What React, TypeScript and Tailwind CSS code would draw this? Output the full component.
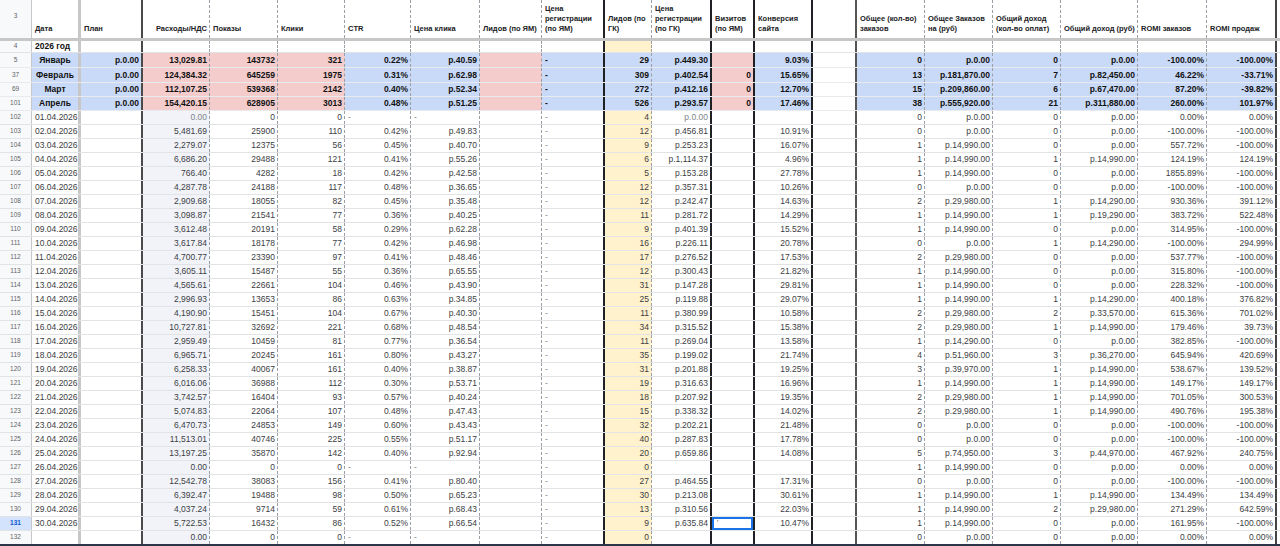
import React from 'react';

// column widths + right borders (widths include the border)
const COLS = [
  'w-[32px] border-r border-[#c7c7c7]',
  'w-[49px] border-r-[3px] border-[#c7c7c7]',
  'w-[62px] border-r-2 border-[#4a4a4a]',
  'w-[67px] border-r border-dashed border-[#9aa0a6]',
  'w-[68px] border-r border-dashed border-[#9aa0a6]',
  'w-[67px] border-r border-dashed border-[#9aa0a6]',
  'w-[66px] border-r border-dashed border-[#9aa0a6]',
  'w-[69px] border-r border-dashed border-[#9aa0a6]',
  'w-[62px] border-r border-dashed border-[#9aa0a6]',
  'w-[63px] border-r-2 border-[#202124]',
  'w-[47px] border-r border-dashed border-[#9aa0a6]',
  'w-[60px] border-r-2 border-[#202124]',
  'w-[43px] border-r-2 border-[#202124]',
  'w-[58px] border-r-2 border-[#202124]',
  'w-[44px] border-r-2 border-[#555]',
  'w-[68px] border-r border-dashed border-[#9aa0a6]',
  'w-[68px] border-r border-dashed border-[#9aa0a6]',
  'w-[68px] border-r border-dashed border-[#9aa0a6]',
  'w-[77px] border-r border-dashed border-[#9aa0a6]',
  'w-[69px] border-r border-dashed border-[#9aa0a6]',
  'w-[70px] border-r-2 border-[#444]',
];

const HEADERS: string[][] = [
  ['Дата'],
  ['План'],
  ['Расходы/НДС'],
  ['Показы'],
  ['Клики'],
  ['CTR'],
  ['Цена клика'],
  ['Лидов (по ЯМ)'],
  ['Цена', 'регистрации', '(по ЯМ)'],
  ['Лидов (по', 'ГК)'],
  ['Цена', 'регистрации', '(по ГК)'],
  ['Визитов', '(по ЯМ)'],
  ['Конверсия', 'сайта'],
  [],
  ['Общее (кол-во)', 'заказов'],
  ['Общее Заказов', 'на (руб)'],
  ['Общий доход', '(кол-во оплат)'],
  ['Общий доход (руб)'],
  ['ROMI заказов'],
  ['ROMI продаж'],
];

type Row = string[];

const MONTHS: Row[] = [
  ['5', 'Январь', '13,029.81', '143732', '321', '0.22%', 'р.40.59', '29', 'р.449.30', '', '9.03%', '0', 'р.0.00', '0', 'р.0.00', '-100.00%', '-100.00%'],
  ['37', 'Февраль', '124,384.32', '645259', '1975', '0.31%', 'р.62.98', '309', 'р.402.54', '0', '15.65%', '13', 'р.181,870.00', '7', 'р.82,450.00', '46.22%', '-33.71%'],
  ['69', 'Март', '112,107.25', '539368', '2142', '0.40%', 'р.52.34', '272', 'р.412.16', '0', '12.70%', '15', 'р.209,860.00', '6', 'р.67,470.00', '87.20%', '-39.82%'],
  ['101', 'Апрель', '154,420.15', '628905', '3013', '0.48%', 'р.51.25', '526', 'р.293.57', '0', '17.46%', '38', 'р.555,920.00', '21', 'р.311,880.00', '260.00%', '101.97%'],
];

const DAYS: Row[] = [
  ['102', '01.04.2026', '0.00', '0', '0', '-', '-', '4', 'р.0.00', '', '0', 'р.0.00', '0', 'р.0.00', '0.00%', '0.00%'],
  ['103', '02.04.2026', '5,481.69', '25900', '110', '0.42%', 'р.49.83', '12', 'р.456.81', '10.91%', '0', 'р.0.00', '0', 'р.0.00', '-100.00%', '-100.00%'],
  ['104', '03.04.2026', '2,279.07', '12375', '56', '0.45%', 'р.40.70', '9', 'р.253.23', '16.07%', '1', 'р.14,990.00', '0', 'р.0.00', '557.72%', '-100.00%'],
  ['105', '04.04.2026', '6,686.20', '29488', '121', '0.41%', 'р.55.26', '6', 'р.1,114.37', '4.96%', '1', 'р.14,990.00', '1', 'р.14,990.00', '124.19%', '124.19%'],
  ['106', '05.04.2026', '766.40', '4282', '18', '0.42%', 'р.42.58', '5', 'р.153.28', '27.78%', '1', 'р.14,990.00', '0', 'р.0.00', '1855.89%', '-100.00%'],
  ['107', '06.04.2026', '4,287.78', '24188', '117', '0.48%', 'р.36.65', '12', 'р.357.31', '10.26%', '0', 'р.0.00', '0', 'р.0.00', '-100.00%', '-100.00%'],
  ['108', '07.04.2026', '2,909.68', '18055', '82', '0.45%', 'р.35.48', '12', 'р.242.47', '14.63%', '2', 'р.29,980.00', '1', 'р.14,290.00', '930.36%', '391.12%'],
  ['109', '08.04.2026', '3,098.87', '21541', '77', '0.36%', 'р.40.25', '11', 'р.281.72', '14.29%', '1', 'р.14,990.00', '1', 'р.19,290.00', '383.72%', '522.48%'],
  ['110', '09.04.2026', '3,612.48', '20191', '58', '0.29%', 'р.62.28', '9', 'р.401.39', '15.52%', '1', 'р.14,990.00', '0', 'р.0.00', '314.95%', '-100.00%'],
  ['111', '10.04.2026', '3,617.84', '18178', '77', '0.42%', 'р.46.98', '16', 'р.226.11', '20.78%', '0', 'р.0.00', '1', 'р.14,290.00', '-100.00%', '294.99%'],
  ['112', '11.04.2026', '4,700.77', '23390', '97', '0.41%', 'р.48.46', '17', 'р.276.52', '17.53%', '2', 'р.29,980.00', '0', 'р.0.00', '537.77%', '-100.00%'],
  ['113', '12.04.2026', '3,605.11', '15487', '55', '0.36%', 'р.65.55', '12', 'р.300.43', '21.82%', '1', 'р.14,990.00', '0', 'р.0.00', '315.80%', '-100.00%'],
  ['114', '13.04.2026', '4,565.61', '22661', '104', '0.46%', 'р.43.90', '31', 'р.147.28', '29.81%', '1', 'р.14,990.00', '0', 'р.0.00', '228.32%', '-100.00%'],
  ['115', '14.04.2026', '2,996.93', '13653', '86', '0.63%', 'р.34.85', '25', 'р.119.88', '29.07%', '1', 'р.14,990.00', '1', 'р.14,290.00', '400.18%', '376.82%'],
  ['116', '15.04.2026', '4,190.90', '15451', '104', '0.67%', 'р.40.30', '11', 'р.380.99', '10.58%', '2', 'р.29,980.00', '2', 'р.33,570.00', '615.36%', '701.02%'],
  ['117', '16.04.2026', '10,727.81', '32692', '221', '0.68%', 'р.48.54', '34', 'р.315.52', '15.38%', '2', 'р.29,980.00', '1', 'р.14,990.00', '179.46%', '39.73%'],
  ['118', '17.04.2026', '2,959.49', '10459', '81', '0.77%', 'р.36.54', '11', 'р.269.04', '13.58%', '1', 'р.14,290.00', '0', 'р.0.00', '382.85%', '-100.00%'],
  ['119', '18.04.2026', '6,965.71', '20245', '161', '0.80%', 'р.43.27', '35', 'р.199.02', '21.74%', '4', 'р.51,960.00', '3', 'р.36,270.00', '645.94%', '420.69%'],
  ['120', '19.04.2026', '6,258.33', '40067', '161', '0.40%', 'р.38.87', '31', 'р.201.88', '19.25%', '3', 'р.39,970.00', '1', 'р.14,990.00', '538.67%', '139.52%'],
  ['121', '20.04.2026', '6,016.06', '36988', '112', '0.30%', 'р.53.71', '19', 'р.316.63', '16.96%', '1', 'р.14,990.00', '1', 'р.14,990.00', '149.17%', '149.17%'],
  ['122', '21.04.2026', '3,742.57', '16404', '93', '0.57%', 'р.40.24', '18', 'р.207.92', '19.35%', '2', 'р.29,980.00', '1', 'р.14,990.00', '701.05%', '300.53%'],
  ['123', '22.04.2026', '5,074.83', '22064', '107', '0.48%', 'р.47.43', '15', 'р.338.32', '14.02%', '2', 'р.29,980.00', '1', 'р.14,990.00', '490.76%', '195.38%'],
  ['124', '23.04.2026', '6,470.73', '24853', '149', '0.60%', 'р.43.43', '32', 'р.202.21', '21.48%', '0', 'р.0.00', '0', 'р.0.00', '-100.00%', '-100.00%'],
  ['125', '24.04.2026', '11,513.01', '40746', '225', '0.55%', 'р.51.17', '40', 'р.287.83', '17.78%', '0', 'р.0.00', '0', 'р.0.00', '-100.00%', '-100.00%'],
  ['126', '25.04.2026', '13,197.25', '35870', '142', '0.40%', 'р.92.94', '20', 'р.659.86', '14.08%', '5', 'р.74,950.00', '3', 'р.44,970.00', '467.92%', '240.75%'],
  ['127', '26.04.2026', '0.00', '0', '0', '-', '-', '0', '', '', '1', 'р.14,990.00', '0', 'р.0.00', '0.00%', '0.00%'],
  ['128', '27.04.2026', '12,542.78', '38083', '156', '0.41%', 'р.80.40', '27', 'р.464.55', '17.31%', '0', 'р.0.00', '0', 'р.0.00', '-100.00%', '-100.00%'],
  ['129', '28.04.2026', '6,392.47', '19488', '98', '0.50%', 'р.65.23', '30', 'р.213.08', '30.61%', '1', 'р.14,990.00', '1', 'р.14,990.00', '134.49%', '134.49%'],
  ['130', '29.04.2026', '4,037.24', '9714', '59', '0.61%', 'р.68.43', '13', 'р.310.56', '22.03%', '1', 'р.14,990.00', '2', 'р.29,980.00', '271.29%', '642.59%'],
  ['131', '30.04.2026', '5,722.53', '16432', '86', '0.52%', 'р.66.54', '9', 'р.635.84', '10.47%', '1', 'р.14,990.00', '0', 'р.0.00', '161.95%', '-100.00%'],
  ['132', '', '0.00', '0', '0', '-', '-', '0', '', '', '0', 'р.0.00', '0', 'р.0.00', '0.00%', '0.00%'],
];

const BLUE = 'bg-[#c9daf8]';
const PINK = 'bg-[#f4cccc]';
const YELLOW = 'bg-[#fff2cc]';

const Cell: React.FC<{ i: number; bg?: string; align?: string; children?: React.ReactNode }> = ({ i, bg = '', align = '', children }) => (
  <div className={`${COLS[i]} ${bg} ${align} relative h-full shrink-0 flex items-center overflow-hidden whitespace-nowrap`}>
    {children}
  </div>
);

const RowNum: React.FC<{ n: string; active?: boolean }> = ({ n, active }) => (
  <Cell
    i={0}
    bg={active ? 'bg-[#d3e3fd]' : 'bg-[#f8f9fa]'}
    align={`justify-center text-[6.5px] ${active ? 'font-bold text-[#0b57d0]' : 'font-normal text-[#5f6368]'}`}
  >
    {n}
  </Cell>
);

const alignFor = (v: string, i: number) => {
  if (v === '-' || i === 1) return 'justify-start pl-[3px]';
  return 'justify-end pr-[2px]';
};

const App: React.FC = () => {
  const monthRow = (r: Row, k: number) => {
    const cells = [r[1], 'р.0.00', r[2], r[3], r[4], r[5], r[6], '', '-', r[7], r[8], r[9], r[10], '', r[11], r[12], r[13], r[14], r[15], r[16]];
    const bgs = [BLUE, BLUE, PINK, PINK, PINK, BLUE, BLUE, PINK, BLUE, BLUE, BLUE, PINK, BLUE, '', BLUE, BLUE, BLUE, BLUE, BLUE, BLUE];
    const h = k < 2 ? 'h-[15px]' : 'h-[14px]';
    return (
      <div key={r[0]} className={`flex ${h} border-b border-[#e8eaed] font-bold text-[8.5px] text-[#111]`}>
        <RowNum n={r[0]} />
        {cells.map((v, j) => (
          <Cell key={j} i={j + 1} bg={bgs[j]} align={j === 0 ? 'justify-center' : alignFor(v, j + 1)}>
            {v}
          </Cell>
        ))}
        <div className="flex-1" />
      </div>
    );
  };

  const dayRow = (r: Row, k: number) => {
    const cells = [r[1], '', r[2], r[3], r[4], r[5], r[6], '', '-', r[7], r[8], '', r[9], '', r[10], r[11], r[12], r[13], r[14], r[15]];
    const last = k === DAYS.length - 1;
    const active = r[0] === '131';
    return (
      <div
        key={r[0]}
        className={`flex text-[8.5px] text-[#3c4043] ${last ? 'h-[15px] border-b-2 border-[#2b3648]' : 'h-[14px] border-b border-[#e2e3e5]'}`}
      >
        <RowNum n={r[0]} active={active} />
        {cells.map((v, j) => {
          const i = j + 1;
          let bg = '';
          if (i === 3) bg = 'bg-[#f1f3f9]';
          if (i === 10) bg = YELLOW;
          const muted = v === '-' || (r[0] === '102' && (i === 3 || i === 11));
          return (
            <Cell key={j} i={i} bg={bg} align={`${alignFor(v, i)} ${muted ? 'text-[#80868b]' : ''}`}>
              {v}
              {active && i === 12 && (
                <div className="absolute inset-0 border-2 border-[#1a73e8] pl-[3px] text-[7px] leading-[8px] text-[#333]">'</div>
              )}
            </Cell>
          );
        })}
        <div className="flex-1" />
      </div>
    );
  };

  return (
    <div className="w-[1280px] h-[546px] overflow-hidden bg-white font-['Liberation_Sans',Arial,sans-serif] leading-none">
      {/* header row */}
      <div className="flex h-[41px] border-b-[3px] border-[#c7c7c7] text-[7.5px] font-bold text-[#202124]">
        <Cell i={0} bg="bg-[#f8f9fa]" align="justify-center pb-[6px] text-[6.5px] font-normal text-[#5f6368]">
          3
        </Cell>
        {HEADERS.map((lines, j) => (
          <div
            key={j}
            className={`${COLS[j + 1]} ${j === 2 ? 'items-end pr-[2px]' : 'pl-[3px]'} h-full shrink-0 flex flex-col justify-end pb-[4px] leading-[10px] overflow-hidden whitespace-nowrap`}
          >
            {lines.map((l) => (
              <span key={l}>{l}</span>
            ))}
          </div>
        ))}
        <div className="flex-1" />
      </div>

      {/* year row */}
      <div className="flex h-[12px] border-b border-[#e2e3e5] text-[8.5px] font-bold text-[#111]">
        <RowNum n="4" />
        {HEADERS.map((_, j) => (
          <Cell key={j} i={j + 1} bg={j + 1 === 10 ? YELLOW : ''} align="justify-start pl-[3px]">
            {j === 0 ? '2026 год' : ''}
          </Cell>
        ))}
        <div className="flex-1" />
      </div>

      {MONTHS.map(monthRow)}
      {DAYS.map(dayRow)}
    </div>
  );
};

export default App;
